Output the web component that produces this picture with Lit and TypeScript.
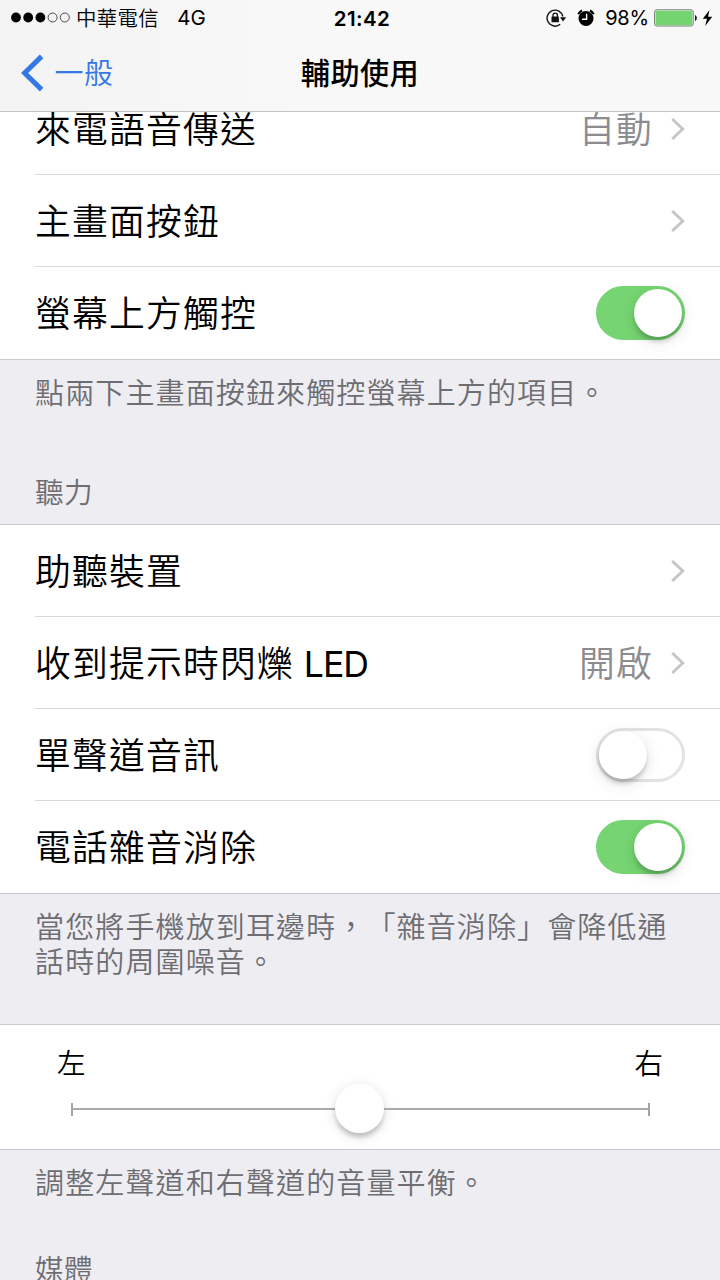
import { LitElement, html, svg, css, nothing } from "lit";
import { customElement, property } from "lit/decorators.js";

@customElement("ios-switch")
class IosSwitch extends LitElement {
  @property({ type: Boolean }) on = false;
  static styles = css`
    :host { display: block; }
    .track {
      box-sizing: border-box; width: 89px; height: 54px; border-radius: 27px;
      border: 3px solid #e3e3e3; background: #fff; display: flex; justify-content: flex-start;
    }
    .track.on { background: #76d572; border-color: #76d572; justify-content: flex-end; }
    .knob {
      width: 48px; height: 48px; border-radius: 50%; background: #fff;
      box-shadow: 0 5px 5px -1px rgba(0,0,0,.2), 0 4px 16px rgba(0,0,0,.12);
    }
  `;
  render() {
    return html`<div class="track ${this.on ? "on" : ""}"><div class="knob"></div></div>`;
  }
}

@customElement("settings-row")
class SettingsRow extends LitElement {
  @property() label = "";
  @property() value = "";
  @property() kind = "link";
  @property({ type: Boolean }) last = false;
  static styles = css`
    :host { display: block; }
    .row {
      box-sizing: border-box; height: 92px; margin-left: 35px; padding-right: 35px;
      display: flex; align-items: center; border-bottom: 1px solid #d9d9dc;
    }
    .row.last { border-bottom-color: transparent; }
    .label { flex: 1; font-size: 35.8px; letter-spacing: 1.2px; line-height: 52px; padding-bottom: 4px; color: #000; white-space: nowrap; }
    .value { font-size: 35.8px; letter-spacing: 1.2px; line-height: 52px; padding-bottom: 4px; color: #8c8c90; margin-right: 17px; }
    .chevron { display: block; width: 15px; height: 24px; }
    .latin { font-family: Inter, sans-serif; font-weight: 400; font-size: 35.6px; letter-spacing: -.9px; line-height: 0; margin-left: .5px; }
  `;
  render() {
    const parts = this.label.split(/([A-Z]+)/).filter(Boolean);
    return html`<div class="row ${this.last ? "last" : ""}">
      <span class="label">${parts.map((p) => (/^[A-Z]+$/.test(p) ? html`<span class="latin">${p}</span>` : p))}</span>
      ${this.value ? html`<span class="value">${this.value}</span>` : nothing}
      ${this.kind === "link"
        ? html`<svg class="chevron" viewBox="0 0 15 24"><path d="M2.2 2L12.7 12L2.2 22" fill="none" stroke="#c5c5ca" stroke-width="3" /></svg>`
        : html`<ios-switch ?on=${this.kind === "on"}></ios-switch>`}
    </div>`;
  }
}

@customElement("app-root")
class AppRoot extends LitElement {
  static styles = css`
    :host {
      display: flex; flex-direction: column; width: 720px; height: 1280px; overflow: hidden;
      background: #eeedf2; font-family: "Noto Sans CJK TC", sans-serif; font-weight: 350; color: #000;
      text-spacing-trim: space-all;
    }
    .top {
      flex: none; box-sizing: border-box; height: 112px; border-bottom: 1px solid #c3c3c6;
      background: linear-gradient(90deg, #f3f3f4, #f8f8f9 40%, #f8f8f9);
    }
    .status { height: 36px; display: grid; grid-template-columns: 1fr 80px 1fr; align-items: center; }
    .carrier, .power { display: flex; align-items: center; height: 36px; }
    .dots { width: 60px; height: 14px; margin-left: 11px; }
    .name { font-size: 20.4px; letter-spacing: .4px; margin-left: 5px; line-height: 30px; padding-bottom: 2px; }
    .latin { font-family: Inter, sans-serif; font-weight: 400; font-size: 20px; line-height: 30px; }
    .net { margin-left: 18px; font-size: 20.5px; }
    .time { font-family: Inter, sans-serif; font-weight: 600; font-size: 20.5px; letter-spacing: .4px; text-align: center; padding-left: 4px; }
    .power { justify-content: flex-end; padding-right: 7px; }
    .lock { width: 22px; height: 20px; }
    .alarm { width: 18px; height: 18px; margin-left: 9px; }
    .pct { margin-left: 10px; margin-right: 5px; letter-spacing: -.2px; }
    .battery { width: 44px; height: 18px; }
    .bolt { width: 11px; height: 18px; margin-left: 4px; }
    .nav { height: 75px; display: grid; grid-template-columns: 1fr auto 1fr; align-items: center; }
    .back { display: flex; align-items: center; color: #3478e6; }
    .back svg { width: 24px; height: 38px; margin-left: 21px; margin-top: -2px; }
    .back span { font-size: 29px; letter-spacing: .5px; margin-left: 9.5px; line-height: 44px; padding-bottom: 5px; }
    .title { font-size: 29.2px; font-weight: 500; letter-spacing: .4px; line-height: 44px; padding-bottom: 5px; }
    .scroll { flex: 1; min-height: 0; overflow: hidden; }
    .list { background: #fff; border-bottom: 1px solid #c9c8cd; }
    .list.framed { border-top: 1px solid #c9c8cd; }
    .first { margin-top: -29px; height: 277px; box-sizing: border-box; }
    .note { font-size: 29px; letter-spacing: 1.13px; line-height: 35px; color: #6d6d72; padding: 14px 35px 0; box-sizing: border-box; white-space: nowrap; }
    .n1 { height: 113px; }
    .n2 { height: 130px; }
    .n3 { height: 100px; }
    .heading { font-size: 28.6px; letter-spacing: .5px; line-height: 35px; height: 51px; color: #6d6d72; padding-left: 35px; }
    .balance { height: 124px; box-sizing: border-box; padding: 16px 57px 0; }
    .sides { display: flex; justify-content: space-between; font-size: 28.5px; line-height: 42px; }
    .slider { display: flex; align-items: center; height: 52px; margin: 0 13px 0 14px; }
    .rail { flex: 1; height: 2px; background: #aaaaac; }
    .rail.lower { flex: none; width: 262px; }
    .tick { width: 2px; height: 13px; background: #a4a4a6; }
    .thumb { width: 49px; height: 49px; margin-top: -2px; border-radius: 50%; background: #fff; box-shadow: 0 5px 5px -1px rgba(0,0,0,.2), 0 3px 13px rgba(0,0,0,.13); }
  `;
  render() {
    return html`
      <header class="top">
        <div class="status">
          <div class="carrier">
            <svg class="dots" viewBox="0 0 60 14">
              ${[0, 1, 2, 3, 4].map((i) => svg`<circle cx=${5 + i * 12.2} cy="6.5" r=${i < 3 ? 4.9 : 4.5} fill=${i < 3 ? "#000" : "none"} stroke=${i < 3 ? "none" : "#222"} stroke-width=".8" />`)}
            </svg>
            <span class="name">中華電信</span><span class="latin net">4G</span>
          </div>
          <div class="time">21:42</div>
          <div class="power">
            <svg class="lock" viewBox="0 0 22 20">
              <path d="M14.2 16.3A8 8 0 1 1 16.9 8.5" fill="none" stroke="#111" stroke-width="1.4" />
              <path d="M14 9.2H20.2L17 13.5Z" fill="#111" />
              <rect x="5.5" y="8.6" width="7.4" height="5.7" rx=".5" fill="#111" />
              <path d="M7 9V7.3a2.2 2.2 0 0 1 4.4 0V9" fill="none" stroke="#111" stroke-width="1.3" />
            </svg>
            <svg class="alarm" viewBox="0 0 18 18">
              <circle cx="9" cy="9.5" r="7.5" />
              <path d="M1.2 5.2A10 10 0 0 1 5 1.5M16.8 5.2A10 10 0 0 0 13 1.5" fill="none" stroke="#000" stroke-width="2" />
              <path d="M9.6 4.8V10.2H5" fill="none" stroke="#fff" stroke-width="1.4" />
            </svg>
            <span class="latin pct">98%</span>
            <svg class="battery" viewBox="0 0 44 18">
              <rect x=".6" y=".8" width="38.6" height="16.2" rx="2.2" fill="#e8f5e8" stroke="#68806a" stroke-width="1" />
              <rect x="1.7" y="1.9" width="36.4" height="14" rx="1.2" fill="#74d56e" />
              <path d="M41 6q1.8.6 1.8 3t-1.8 3z" fill="#111" />
            </svg>
            <svg class="bolt" viewBox="0 0 11 18"><path d="M7.5 1L.8 9.8H5L3.2 17L10.2 7.7H6z" /></svg>
          </div>
        </div>
        <div class="nav">
          <div class="back">
            <svg viewBox="0 0 24 38"><path d="M20.6 2.4L3.6 19L20.6 35.6" fill="none" stroke="#3478e6" stroke-width="5" /></svg>
            <span>一般</span>
          </div>
          <div class="title">輔助使用</div>
        </div>
      </header>
      <main class="scroll">
        <section class="list first">
          <settings-row label="來電語音傳送" value="自動"></settings-row>
          <settings-row label="主畫面按鈕"></settings-row>
          <settings-row label="螢幕上方觸控" kind="on" last></settings-row>
        </section>
        <div class="note n1">點兩下主畫面按鈕來觸控螢幕上方的項目。</div>
        <div class="heading">聽力</div>
        <section class="list framed">
          <settings-row label="助聽裝置"></settings-row>
          <settings-row label="收到提示時閃爍 LED" value="開啟"></settings-row>
          <settings-row label="單聲道音訊" kind="off"></settings-row>
          <settings-row label="電話雜音消除" kind="on" last></settings-row>
        </section>
        <div class="note n2">當您將手機放到耳邊時，「雜音消除」會降低通<br />話時的周圍噪音。</div>
        <section class="list framed">
          <div class="balance">
            <div class="sides"><span>左</span><span>右</span></div>
            <div class="slider">
              <div class="tick"></div><div class="rail lower"></div><div class="thumb"></div><div class="rail"></div><div class="tick"></div>
            </div>
          </div>
        </section>
        <div class="note n3">調整左聲道和右聲道的音量平衡。</div>
        <div class="heading">媒體</div>
      </main>
    `;
  }
}
